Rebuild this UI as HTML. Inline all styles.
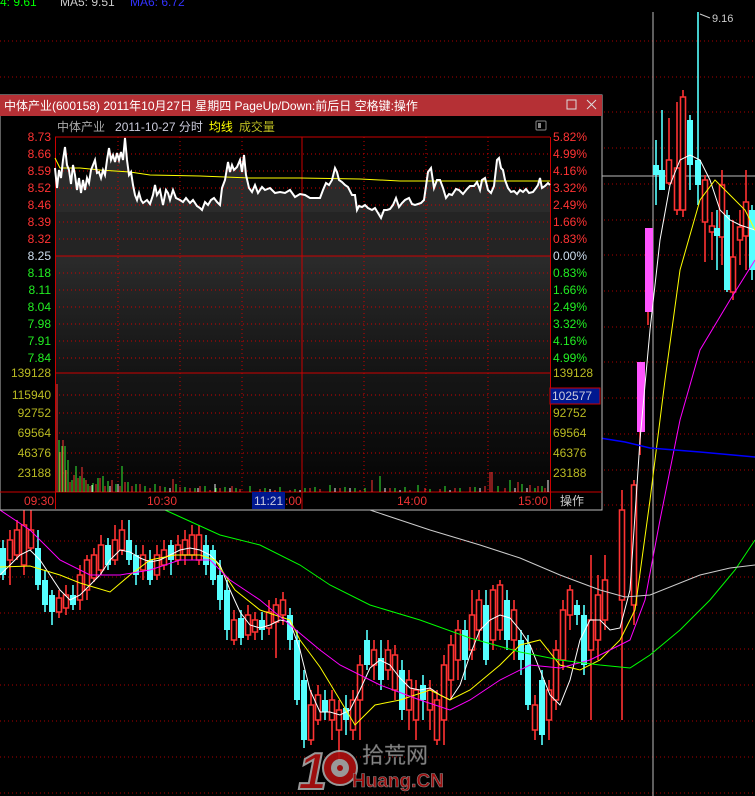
<!DOCTYPE html>
<html><head><meta charset="utf-8"><style>
body{margin:0;background:#000;width:755px;height:796px;overflow:hidden}
svg{position:absolute;left:0;top:0}
text{font-family:"Liberation Sans","Noto Sans CJK SC",sans-serif;font-size:12px}
</style></head><body>
<svg width="755" height="796" xmlns="http://www.w3.org/2000/svg">
<defs>
<linearGradient id="g" x1="0" y1="0" x2="0" y2="1"><stop offset="0" stop-color="#2b2b2b"/><stop offset="1" stop-color="#141414"/></linearGradient>
<linearGradient id="g2" x1="0" y1="0" x2="0" y2="1"><stop offset="0" stop-color="#161616"/><stop offset="1" stop-color="#050505"/></linearGradient>
</defs>
<g stroke="#a00" stroke-dasharray="1,3">
<line x1="0" y1="41" x2="755" y2="41"/><line x1="0" y1="77" x2="755" y2="77"/><line x1="0" y1="112" x2="755" y2="112"/><line x1="0" y1="148" x2="755" y2="148"/><line x1="0" y1="184" x2="755" y2="184"/><line x1="0" y1="220" x2="755" y2="220"/><line x1="0" y1="255" x2="755" y2="255"/><line x1="0" y1="291" x2="755" y2="291"/><line x1="0" y1="327" x2="755" y2="327"/><line x1="0" y1="362" x2="755" y2="362"/><line x1="0" y1="398" x2="755" y2="398"/><line x1="0" y1="434" x2="755" y2="434"/><line x1="0" y1="470" x2="755" y2="470"/><line x1="0" y1="505" x2="755" y2="505"/><line x1="0" y1="541" x2="755" y2="541"/><line x1="0" y1="577" x2="755" y2="577"/><line x1="0" y1="613" x2="755" y2="613"/><line x1="0" y1="649" x2="755" y2="649"/><line x1="0" y1="685" x2="755" y2="685"/><line x1="0" y1="721" x2="755" y2="721"/><line x1="0" y1="757" x2="755" y2="757"/><line x1="0" y1="793" x2="755" y2="793"/>
</g>
<text x="0" y="6" fill="#0f0">4: 9.61</text><text x="60" y="6" fill="#ccc">MA5: 9.51</text><text x="130" y="6" fill="#33f">MA6: 6.72</text>
<line x1="653" y1="12" x2="653" y2="796" stroke="#bbb"/>
<line x1="550" y1="176" x2="755" y2="176" stroke="#bbb"/>

<path stroke="#ff3333" stroke-width="1.6" fill="none" d="M10 530V585M17 520V560M24 505V575M31 505V550M59 590V618M66 585V615M80 565V610M87 555V600M94 548V582M101 535V575M115 525V565M122 520V555M143 545V580M157 545V580M164 540V570M178 535V565M185 530V565M192 525V560M199 525V565M234 610V645M248 605V640M255 612V640M269 600V635M276 598V658M283 592V625M311 690V745M318 685V725M332 690V740M339 700V760M353 690V740M360 655V740M374 640V680M388 640V680M395 645V700M409 670V730M416 680V740M430 680V730M437 690V745M444 655V745M451 635V700M458 620V680M472 590V660M479 590V640M493 585V650M500 580V640M514 600V660M535 695V740M549 680V740M556 640V710M563 600V670M570 585V630M591 555V720M598 575V660M605 555V630M622 490V720M634 480V625M640 432V455M648 312V325M669 118V185M677 102V215M683 90V217M705 175V262M712 212V260M722 170V265M733 220V300M740 210V265M746 170V270"/>
<path stroke="#ff3333" stroke-width="1.6" fill="#000" d="M7.5 540h5v20h-5zM14.5 530h5v25h-5zM21.5 525h5v40h-5zM28.5 530h5v18h-5zM56.5 598h5v14h-5zM63.5 595h5v13h-5zM77.5 575h5v25h-5zM84.5 560h5v30h-5zM91.5 555h5v23h-5zM98.5 545h5v25h-5zM112.5 540h5v20h-5zM119.5 530h5v20h-5zM140.5 555h5v15h-5zM154.5 555h5v20h-5zM161.5 550h5v15h-5zM175.5 545h5v15h-5zM182.5 540h5v15h-5zM189.5 535h5v20h-5zM196.5 535h5v25h-5zM231.5 620h5v20h-5zM245.5 615h5v20h-5zM252.5 620h5v12h-5zM266.5 612h5v16h-5zM273.5 605h5v17h-5zM280.5 600h5v15h-5zM308.5 705h5v35h-5zM315.5 695h5v25h-5zM329.5 700h5v20h-5zM336.5 710h5v20h-5zM350.5 700h5v30h-5zM357.5 665h5v35h-5zM371.5 650h5v15h-5zM385.5 650h5v20h-5zM392.5 655h5v35h-5zM406.5 680h5v30h-5zM413.5 690h5v30h-5zM427.5 690h5v20h-5zM434.5 700h5v40h-5zM441.5 665h5v55h-5zM448.5 645h5v35h-5zM455.5 630h5v30h-5zM469.5 615h5v35h-5zM476.5 600h5v30h-5zM490.5 590h5v50h-5zM497.5 585h5v45h-5zM511.5 610h5v30h-5zM532.5 705h5v25h-5zM546.5 690h5v30h-5zM553.5 650h5v50h-5zM560.5 610h5v50h-5zM567.5 590h5v25h-5zM588.5 620h5v30h-5zM595.5 595h5v45h-5zM602.5 580h5v40h-5zM619.5 510h5v90h-5zM631.5 485h5v120h-5zM666.5 160h5v23h-5zM674.5 168h5v42h-5zM680.5 97h5v113h-5zM702.5 180h5v42h-5zM709.5 226h5v6h-5zM719.5 185h5v52h-5zM730.5 257h5v35h-5zM737.5 227h5v13h-5zM743.5 202h5v34h-5z"/>
<path stroke="#55ffff" stroke-width="1.6" fill="none" d="M3 540V580M38 530V590M45 570V612M52 590V625M73 585V610M108 538V570M129 520V565M136 545V585M150 550V585M171 540V575M206 535V575M213 545V585M220 560V610M227 580V640M241 610V645M262 612V640M290 608V650M297 630V705M304 670V748M325 690V720M346 695V735M367 630V670M381 640V690M402 660V720M423 675V720M465 620V680M486 590V665M507 590V650M521 630V675M528 635V710M542 670V745M577 600V625M584 605V675M656 140V205M662 110V190M690 115V190M698 12V205M717 210V270M727 210V292M752 205V280"/>
<path fill="#55ffff" d="M0 548h6v27h-6zM35 548h6v37h-6zM42 580h6v25h-6zM49 595h6v17h-6zM70 595h6v10h-6zM105 545h6v20h-6zM126 540h6v20h-6zM133 555h6v20h-6zM147 560h6v20h-6zM168 545h6v15h-6zM203 545h6v20h-6zM210 550h6v30h-6zM217 575h6v25h-6zM224 590h6v40h-6zM238 618h6v20h-6zM259 620h6v10h-6zM287 615h6v25h-6zM294 640h6v60h-6zM301 680h6v60h-6zM322 700h6v12h-6zM343 708h6v12h-6zM364 640h6v25h-6zM378 658h6v22h-6zM399 670h6v40h-6zM420 685h6v15h-6zM462 630h6v30h-6zM483 605h6v55h-6zM504 600h6v40h-6zM518 640h6v20h-6zM525 645h6v60h-6zM539 680h6v55h-6zM574 605h6v10h-6zM581 615h6v50h-6zM653 165h6v10h-6zM659 170h6v20h-6zM687 120h6v45h-6zM695 160h6v25h-6zM714 228h6v8h-6zM724 215h6v75h-6zM749 210h6v60h-6z"/>
<path fill="#ff55ff" d="M637 362h8v70h-8zM645 228h8v84h-8z"/>
<text x="712" y="22" fill="#ccc" style="font-size:11px">9.16</text><path d="M700 14 L710 18" stroke="#ccc"/>

<polyline fill="none" stroke="#fff" points="0,575 10,565 20,555 30,550 40,560 50,575 60,590 70,600 80,595 90,585 100,575 110,560 120,550 130,552 140,558 150,562 160,560 170,555 180,550 190,548 200,550 210,555 220,565 230,590 240,612 250,625 260,628 270,625 280,620 290,622 300,650 310,690 320,712 330,712 340,715 350,710 360,690 370,668 380,660 390,665 400,678 410,688 420,690 430,688 440,695 450,700 460,685 470,655 480,630 490,620 500,615 510,618 520,630 530,645 540,670 550,695 560,705 570,680 580,640 590,620 600,620 610,630 620,628 630,590 640,440 650,330 660,240 670,185 680,160 690,155 700,160 710,180 720,210 730,220 740,225 755,230"/>
<polyline fill="none" stroke="#ff0" points="0,567 30,566 60,575 80,583 110,592 130,575 150,560 175,555 200,555 215,560 235,590 260,610 290,620 300,640 320,667 340,700 355,725 375,705 400,700 430,690 450,700 470,690 500,665 520,645 540,640 560,665 580,670 600,660 620,640 635,610 650,500 665,380 680,270 700,200 715,180 730,195 745,210 755,230"/>
<polyline fill="none" stroke="#f0f" points="0,510 30,530 60,560 90,575 120,575 150,570 180,560 210,560 230,580 260,600 290,625 320,650 340,665 380,685 420,700 450,710 470,700 500,680 530,665 560,668 590,660 610,650 630,640 645,600 660,520 680,420 700,350 730,300 755,260"/>
<polyline fill="none" stroke="#0f0" points="165,510 220,535 260,545 300,565 330,585 370,605 420,620 470,638 520,652 560,660 600,665 630,668 650,655 680,630 710,600 735,570 755,540"/>
<polyline fill="none" stroke="#ccc" points="370,510 430,530 480,545 520,558 560,575 600,590 625,597 650,595 700,575 730,568 755,565"/>
<polyline fill="none" stroke="#00f" stroke-width="1.5" points="600,438 625,442 650,448 700,452 755,457"/>

<rect x="0" y="95" width="602" height="415" fill="#000" stroke="#bbb"/>
<rect x="0" y="95" width="602" height="21" fill="#b53035"/>
<text x="4" y="110" fill="#fff">中体产业(600158) 2011年10月27日 星期四 PageUp/Down:前后日 空格键:操作</text>
<rect x="567" y="100" width="9" height="9" fill="none" stroke="#ddd"/><path d="M587 100 L596 109 M596 100 L587 109" stroke="#ddd"/>
<text x="57" y="131"><tspan fill="#aaa">中体产业</tspan><tspan fill="#ccd" dx="10">2011-10-27 分时</tspan><tspan fill="#ff0" dx="6">均线</tspan><tspan fill="#bb2" dx="6">成交量</tspan></text>
<rect x="536" y="121" width="10" height="9" fill="none" stroke="#888" rx="1"/><rect x="538" y="123" width="3" height="5" fill="#888"/>

<rect x="55" y="256" width="495" height="117" fill="url(#g)"/>
<rect x="55" y="373" width="495" height="119" fill="url(#g2)"/>
<rect x="55" y="212" width="495" height="44" fill="#242424"/>
<polygon fill="#2b2b2b" points="55,212 55,168 57,188 59,170 61,178 63,160 65,147 67,165 69,170 71,184 73,165 75,175 77,190 79,178 81,193 83,180 85,190 87,178 89,183 91,170 93,165 95,160 97,173 99,172 101,178 103,170 105,175 107,160 109,148 111,160 113,155 115,162 117,153 119,160 121,152 123,160 125,138 127,160 129,175 131,172 133,185 135,195 137,200 139,193 141,200 143,203 147,200 150,204 153,195 155,185 157,195 160,190 163,205 166,190 168,193 170,200 173,190 176,198 180,200 183,202 186,198 190,203 193,200 197,206 200,208 202,210 205,202 208,205 211,200 214,198 217,202 220,205 222,188 225,180 228,162 230,172 232,165 234,170 237,167 240,160 242,172 244,155 246,175 249,188 252,192 255,185 258,193 262,187 265,190 270,188 275,193 280,192 285,193 290,190 295,197 300,194 305,195 310,198 315,198 320,198 323,190 326,183 329,185 332,180 335,168 337,172 339,180 342,182 345,185 348,187 352,195 355,195 357,210 359,206 362,207 365,205 368,208 372,210 375,208 378,213 381,218 384,210 387,210 390,209 393,205 396,198 399,207 402,203 405,200 409,198 412,204 415,205 418,204 421,203 424,200 428,172 431,168 434,188 437,180 440,180 443,188 446,198 449,194 452,195 456,189 459,190 463,194 467,189 470,186 474,186 477,182 480,190 482,180 485,178 488,190 491,193 494,186 497,160 499,158 501,168 503,170 505,180 508,188 511,192 514,191 517,194 520,190 523,192 526,189 529,193 533,192 536,188 538,185 540,178 542,188 545,186 548,183 550,185 550,212"/>

<g stroke="#c00" stroke-dasharray="1,3">
<line x1="55" y1="154" x2="550" y2="154"/><line x1="55" y1="171" x2="550" y2="171"/><line x1="55" y1="188" x2="550" y2="188"/><line x1="55" y1="205" x2="550" y2="205"/><line x1="55" y1="222" x2="550" y2="222"/><line x1="55" y1="239" x2="550" y2="239"/><line x1="55" y1="273" x2="550" y2="273"/><line x1="55" y1="290" x2="550" y2="290"/><line x1="55" y1="307" x2="550" y2="307"/><line x1="55" y1="324" x2="550" y2="324"/><line x1="55" y1="341" x2="550" y2="341"/><line x1="55" y1="358" x2="550" y2="358"/><line x1="55" y1="395" x2="550" y2="395"/><line x1="55" y1="413" x2="550" y2="413"/><line x1="55" y1="433" x2="550" y2="433"/><line x1="55" y1="453" x2="550" y2="453"/><line x1="55" y1="473" x2="550" y2="473"/>
<line x1="118" y1="137" x2="118" y2="492"/><line x1="180" y1="137" x2="180" y2="492"/><line x1="242" y1="137" x2="242" y2="492"/><line x1="364" y1="137" x2="364" y2="492"/><line x1="426" y1="137" x2="426" y2="492"/><line x1="488" y1="137" x2="488" y2="492"/>
</g>
<g stroke="#c00">
<line x1="55" y1="137" x2="550" y2="137"/><line x1="55" y1="256" x2="550" y2="256"/><line x1="55" y1="373" x2="550" y2="373"/><line x1="0" y1="492" x2="602" y2="492"/>
<line x1="55.5" y1="137" x2="55.5" y2="509"/><line x1="302" y1="137" x2="302" y2="509"/><line x1="550.5" y1="137" x2="550.5" y2="509"/>
</g>

<path stroke="#ff3333" d="M57 492V384M60 492V452M63 492V440M66 492V470M70 492V482M74 492V475M78 492V478M82 492V467M86 492V480M90 492V486M96 492V484M100 492V478M105 492V486M112 492V480M120 492V486M125 492V482M132 492V486M140 492V484M150 492V488M160 492V486M173 492V479M180 492V487M190 492V488M200 492V486M210 492V490M220 492V488M232 492V486M240 492V489M260 492V489M275 492V490M290 492V490M310 492V488M320 492V489M340 492V488M360 492V490M372 492V480M390 492V488M410 492V490M425 492V488M440 492V489M455 492V488M470 492V487M485 492V486M490 492V472M492 492V472M505 492V488M518 492V482M530 492V485M538 492V486M545 492V488"/>
<path stroke="#33ee33" d="M59 492V440M62 492V446M65 492V446M68 492V460M72 492V480M76 492V466M80 492V476M84 492V478M88 492V484M93 492V483M98 492V478M103 492V476M108 492V481M116 492V484M122 492V466M128 492V482M136 492V484M145 492V486M155 492V484M165 492V487M176 492V484M185 492V487M195 492V488M205 492V486M216 492V488M225 492V487M236 492V488M250 492V486M265 492V488M280 492V487M295 492V489M305 492V488M315 492V487M330 492V485M345 492V487M355 492V488M365 492V488M380 492V476M395 492V488M405 492V487M418 492V485M430 492V489M445 492V486M460 492V488M475 492V487M498 492V486M510 492V480M522 492V484M535 492V488M542 492V486"/>
<path stroke="#eee" d="M92 492V485M110 492V486M118 492V484M170 492V488M198 492V488M215 492V484M230 492V488M270 492V489M300 492V490M335 492V488M350 492V488M385 492V488M400 492V490M450 492V490M480 492V488M515 492V488M527 492V488M548 492V480"/>

<polyline fill="none" stroke="#ff0" points="55,158 60,168 80,168 100,170 130,172 150,175 200,176 250,178 300,178 360,179 400,181 550,181"/>
<polyline fill="none" stroke="#fff" stroke-width="2" points="55,168 57,188 59,170 61,178 63,160 65,147 67,165 69,170 71,184 73,165 75,175 77,190 79,178 81,193 83,180 85,190 87,178 89,183 91,170 93,165 95,160 97,173 99,172 101,178 103,170 105,175 107,160 109,148 111,160 113,155 115,162 117,153 119,160 121,152 123,160 125,138 127,160 129,175 131,172 133,185 135,195 137,200 139,193 141,200 143,203 147,200 150,204 153,195 155,185 157,195 160,190 163,205 166,190 168,193 170,200 173,190 176,198 180,200 183,202 186,198 190,203 193,200 197,206 200,208 202,210 205,202 208,205 211,200 214,198 217,202 220,205 222,188 225,180 228,162 230,172 232,165 234,170 237,167 240,160 242,172 244,155 246,175 249,188 252,192 255,185 258,193 262,187 265,190 270,188 275,193 280,192 285,193 290,190 295,197 300,194 305,195 310,198 315,198 320,198 323,190 326,183 329,185 332,180 335,168 337,172 339,180 342,182 345,185 348,187 352,195 355,195 357,210 359,206 362,207 365,205 368,208 372,210 375,208 378,213 381,218 384,210 387,210 390,209 393,205 396,198 399,207 402,203 405,200 409,198 412,204 415,205 418,204 421,203 424,200 428,172 431,168 434,188 437,180 440,180 443,188 446,198 449,194 452,195 456,189 459,190 463,194 467,189 470,186 474,186 477,182 480,190 482,180 485,178 488,190 491,193 494,186 497,160 499,158 501,168 503,170 505,180 508,188 511,192 514,191 517,194 520,190 523,192 526,189 529,193 533,192 536,188 538,185 540,178 542,188 545,186 548,183 550,185"/>

<g text-anchor="end">
<text x="51" y="141" fill="#f33">8.73</text><text x="51" y="158" fill="#f33">8.66</text><text x="51" y="175" fill="#f33">8.59</text><text x="51" y="192" fill="#f33">8.52</text><text x="51" y="209" fill="#f33">8.46</text><text x="51" y="226" fill="#f33">8.39</text><text x="51" y="243" fill="#f33">8.32</text><text x="51" y="260" fill="#cde">8.25</text><text x="51" y="277" fill="#2e2">8.18</text><text x="51" y="294" fill="#2e2">8.11</text><text x="51" y="311" fill="#2e2">8.04</text><text x="51" y="328" fill="#2e2">7.98</text><text x="51" y="345" fill="#2e2">7.91</text><text x="51" y="362" fill="#2e2">7.84</text>
<text x="51" y="377" fill="#bb2">139128</text><text x="51" y="399" fill="#bb2">115940</text><text x="51" y="417" fill="#bb2">92752</text><text x="51" y="437" fill="#bb2">69564</text><text x="51" y="457" fill="#bb2">46376</text><text x="51" y="477" fill="#bb2">23188</text>
</g>
<g>
<text x="553" y="141" fill="#f33">5.82%</text><text x="553" y="158" fill="#f33">4.99%</text><text x="553" y="175" fill="#f33">4.16%</text><text x="553" y="192" fill="#f33">3.32%</text><text x="553" y="209" fill="#f33">2.49%</text><text x="553" y="226" fill="#f33">1.66%</text><text x="553" y="243" fill="#f33">0.83%</text><text x="553" y="260" fill="#cde">0.00%</text><text x="553" y="277" fill="#2e2">0.83%</text><text x="553" y="294" fill="#2e2">1.66%</text><text x="553" y="311" fill="#2e2">2.49%</text><text x="553" y="328" fill="#2e2">3.32%</text><text x="553" y="345" fill="#2e2">4.16%</text><text x="553" y="362" fill="#2e2">4.99%</text>
<text x="553" y="377" fill="#bb2">139128</text><text x="553" y="417" fill="#bb2">92752</text><text x="553" y="437" fill="#bb2">69564</text><text x="553" y="457" fill="#bb2">46376</text><text x="553" y="477" fill="#bb2">23188</text>
</g>
<rect x="550" y="388" width="50" height="16" fill="#001890" stroke="#c00"/><text x="552" y="400" fill="#ccd">102577</text>
<text x="24" y="505" fill="#e33">09:30</text><text x="147" y="505" fill="#e33">10:30</text><rect x="252" y="492" width="33" height="17" fill="#001890"/><text x="254" y="505" fill="#ccd">11:21</text><text x="285" y="505" fill="#e33">:00</text><text x="397" y="505" fill="#e33">14:00</text><text x="518" y="505" fill="#e33">15:00</text><text x="560" y="505" fill="#ccc">操作</text>

<g opacity="0.9">
<text x="298" y="789" fill="#b01010" stroke="#aaa" stroke-width="2" style="font-size:52px;font-weight:bold;font-style:italic">1</text>
<circle cx="340" cy="768" r="17" fill="#b01010" stroke="#aaa" stroke-width="2"/>
<circle cx="340" cy="768" r="9" fill="#aaa"/>
<circle cx="340" cy="768" r="3" fill="#b01010"/>
<text x="362" y="763" fill="#999" stroke="#555" stroke-width=".5" style="font-size:22px">拾荒网</text>
<text x="352" y="787" fill="#b01010" stroke="#999" stroke-width=".6" style="font-size:19px;font-weight:bold">Huang.CN</text>
</g>
</svg>
</body></html>
